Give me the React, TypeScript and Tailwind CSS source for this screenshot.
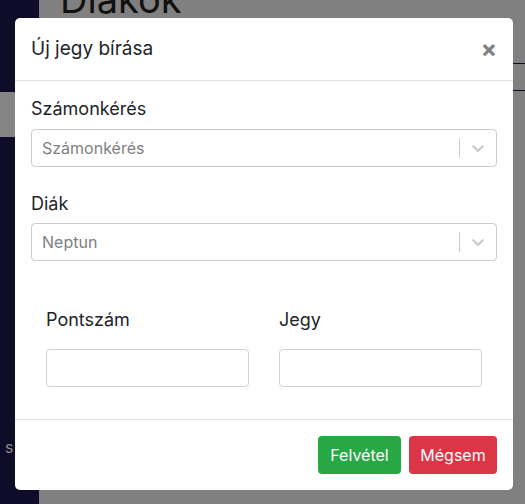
import React from "react";

function Chevron() {
  return (
    <svg width="20" height="20" viewBox="0 0 20 20" className="fill-[#cccccc]">
      <path d="M4.516 7.548c0.436-0.446 1.043-0.481 1.576 0l3.908 3.747 3.908-3.747c0.533-0.481 1.141-0.446 1.574 0 0.436 0.445 0.408 1.197 0 1.615-0.406 0.418-4.695 4.502-4.695 4.502-0.217 0.223-0.502 0.335-0.787 0.335s-0.57-0.112-0.789-0.335c0 0-4.287-4.084-4.695-4.502s-0.436-1.17 0-1.615z" />
    </svg>
  );
}

function SelectBox({ placeholder }: { placeholder: string }) {
  return (
    <div className="flex h-[38px] items-center rounded-[4px] border border-[#cccccc] bg-white">
      <div className="flex-1 px-[10px] text-[16px] text-[#808080]">{placeholder}</div>
      <span className="h-[20px] w-px bg-[#cccccc]" />
      <div className="flex h-full w-[36px] items-center justify-center">
        <Chevron />
      </div>
    </div>
  );
}

export default function App() {
  return (
    <div className="relative flex h-[504px] w-[525px] overflow-hidden bg-[#808080] font-['Inter',sans-serif]">
      {/* page behind the backdrop (already dimmed) */}
      <div className="flex w-[39px] shrink-0 flex-col bg-[#0f0c2a]">
        <div className="mt-[92px] h-[45px] bg-[#858585]" />
        <div className="mt-[300px] pl-[5px] text-[16px] leading-[20px] text-[#8a8a8a]">s</div>
      </div>
      <div className="flex flex-1 flex-col">
        <div className="mt-[-20px] h-[38px] pl-[21px] text-[38px] leading-[38px] text-[#111111]">
          Diákok
        </div>
        <div className="mt-[45px] h-[28px] border-y border-[#0f0c2a]" />
      </div>

      {/* modal */}
      <div className="absolute left-[15px] top-[18px] flex h-[472px] w-[498px] flex-col rounded-[5px] bg-white text-[#212529]">
        <div className="flex h-[63px] items-center justify-between border-b border-[#dee2e6] px-4">
          <h5 className="text-[19px] leading-[30px]">Új jegy bírása</h5>
          <button className="text-[24px] font-bold leading-none text-[#808080]">×</button>
        </div>

        <div className="flex-1 px-4 pt-4">
          <label className="mb-2 block text-[18px] leading-[24px]">Számonkérés</label>
          <SelectBox placeholder="Számonkérés" />

          <label className="mb-[7px] mt-[25px] block text-[18px] leading-[24px]">Diák</label>
          <SelectBox placeholder="Neptun" />

          <div className="mt-[47px] grid grid-cols-2">
            <div className="px-[15px]">
              <label className="mb-[17px] block text-[18px] leading-[24px]">Pontszám</label>
              <input className="block h-[38px] w-full rounded-[4px] border border-[#ced4da] px-3" />
            </div>
            <div className="px-[15px]">
              <label className="mb-[17px] block text-[18px] leading-[24px]">Jegy</label>
              <input className="block h-[38px] w-full rounded-[4px] border border-[#ced4da] px-3" />
            </div>
          </div>
        </div>

        <div className="flex justify-end gap-2 border-t border-[#dee2e6] p-4">
          <button className="h-[38px] w-[83px] rounded-[4px] bg-[#28a745] text-[16px] text-white">Felvétel</button>
          <button className="h-[38px] w-[88px] rounded-[4px] bg-[#dc3545] text-[16px] text-white">Mégsem</button>
        </div>
      </div>
    </div>
  );
}
